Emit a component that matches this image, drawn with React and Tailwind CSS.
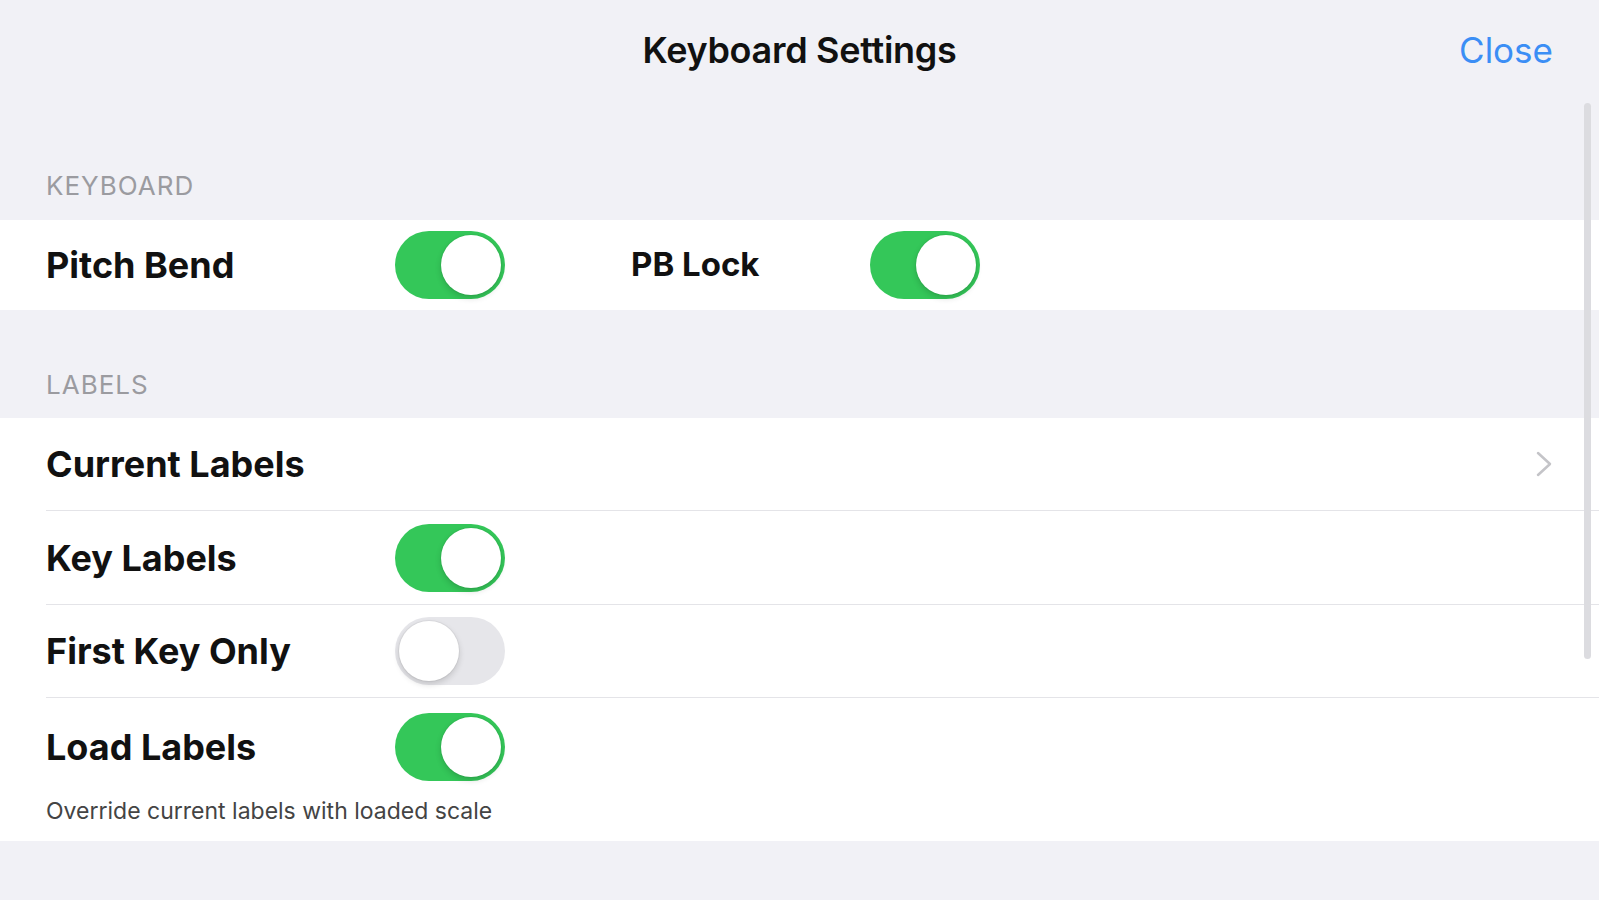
import React from 'react';

function Toggle({ on }) {
  return (
    <div
      className={
        'relative w-[110px] h-[68px] rounded-full shrink-0 ' +
        (on ? 'bg-[#34c759]' : 'bg-[#e6e6ea]')
      }
    >
      <div
        className={
          'absolute top-[4px] w-[60px] h-[60px] rounded-full bg-white shadow-[0_3px_6px_rgba(0,0,0,0.16),0_0_0_1px_rgba(0,0,0,0.04)] ' +
          (on ? 'left-[46px]' : 'left-[4px]')
        }
      ></div>
    </div>
  );
}

function SectionHeader({ children, height, pb }) {
  return (
    <div className={'flex items-end px-[46px] ' + height + ' ' + pb}>
      <span className="text-[26px] leading-[30px] text-[#9b9ba0] tracking-[1px]">{children}</span>
    </div>
  );
}

function Row({ label, on, first }) {
  return (
    <div className={'ml-[46px] h-[93px] flex items-center ' + (first ? '' : 'border-t border-[#e4e4e8]')}>
      <div className="w-[349px] text-[36px] font-bold text-[#111]">{label}</div>
      <Toggle on={on} />
    </div>
  );
}

export default function App() {
  return (
    <div
      className="relative w-full h-[900px] bg-[#f1f1f6] overflow-hidden"
      style={{ fontFamily: 'Inter, "Noto Sans", sans-serif' }}
    >
      {/* Nav bar */}
      <div className="h-[100px] grid grid-cols-[1fr_auto_1fr] items-center px-[46px]">
        <div></div>
        <div className="text-[36px] font-semibold text-[#111] tracking-[-0.3px]">Keyboard Settings</div>
        <div className="text-right text-[35px] text-[#3b8ef5]">Close</div>
      </div>

      {/* Keyboard */}
      <SectionHeader height="h-[120px]" pb="pb-[19px]">KEYBOARD</SectionHeader>
      <div className="bg-white h-[90px] flex items-center pl-[46px]">
        <div className="w-[349px] text-[36px] font-bold text-[#111]">Pitch Bend</div>
        <Toggle on />
        <div className="ml-[126px] w-[239px] text-[33px] font-bold text-[#111]">PB Lock</div>
        <Toggle on />
      </div>

      {/* Labels */}
      <SectionHeader height="h-[108px]" pb="pb-[18px]">LABELS</SectionHeader>
      <div className="bg-white">
        <div className="ml-[46px] h-[93px] flex items-center justify-between pr-[47px] border-b border-[#e4e4e8]">
          <div className="text-[36px] font-bold text-[#111]">Current Labels</div>
          <svg width="16" height="26" viewBox="0 0 16 26" fill="none">
            <path d="M2 2 L14 13 L2 24" stroke="#c4c4c8" strokeWidth="2.5" strokeLinecap="round" strokeLinejoin="round" />
          </svg>
        </div>
        <Row label="Key Labels" on first />
        <Row label="First Key Only" on={false} />
        <div className="ml-[46px] border-t border-[#e4e4e8] pt-[15px] pb-[16px]">
          <div className="flex items-center">
            <div className="w-[349px] text-[36px] font-bold text-[#111]">Load Labels</div>
            <Toggle on />
          </div>
          <div className="mt-[16px] text-[23px] leading-[28px] text-[#444]">Override current labels with loaded scale</div>
        </div>
      </div>

      {/* Scroll indicator */}
      <div className="absolute left-[1584px] top-[103px] w-[7px] h-[556px] rounded-full bg-[#dcdce0]"></div>
    </div>
  );
}
